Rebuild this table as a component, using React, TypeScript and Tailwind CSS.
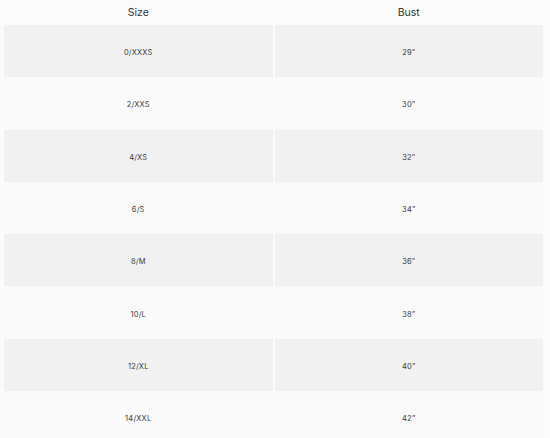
import React from "react";

const rows: [string, string][] = [
  ["0/XXXS", "29\u201d"],
  ["2/XXS", "30\u201d"],
  ["4/XS", "32\u201d"],
  ["6/S", "34\u201d"],
  ["8/M", "36\u201d"],
  ["10/L", "38\u201d"],
  ["12/XL", "40\u201d"],
  ["14/XXL", "42\u201d"],
];

export default function App() {
  return (
    <div
      className="w-[550px] h-[438px] overflow-hidden bg-[#fbfbfb] pl-[4px] pr-[7px]"
      style={{ fontFamily: "Inter, 'Liberation Sans', sans-serif" }}
    >
      <div className="grid grid-cols-2 gap-x-[2px] h-[25px] items-center text-[10.5px] text-[#333]">
        <div className="text-center">Size</div>
        <div className="text-center">Bust</div>
      </div>
      {rows.map(([s, b], i) => (
        <div
          key={s}
          className="grid grid-cols-2 gap-x-[2px] h-[52.3px] text-[7.5px] text-[#3a3a3a] tracking-[0.2px]"
        >
          <div
            className={
              "flex items-center justify-center pt-[3px] " +
              (i % 2 === 0 ? "bg-[#f1f1f1]" : "bg-[#fafafa]")
            }
          >
            {s}
          </div>
          <div
            className={
              "flex items-center justify-center pt-[3px] " +
              (i % 2 === 0 ? "bg-[#f1f1f1]" : "bg-[#fafafa]")
            }
          >
            {b}
          </div>
        </div>
      ))}
    </div>
  );
}
